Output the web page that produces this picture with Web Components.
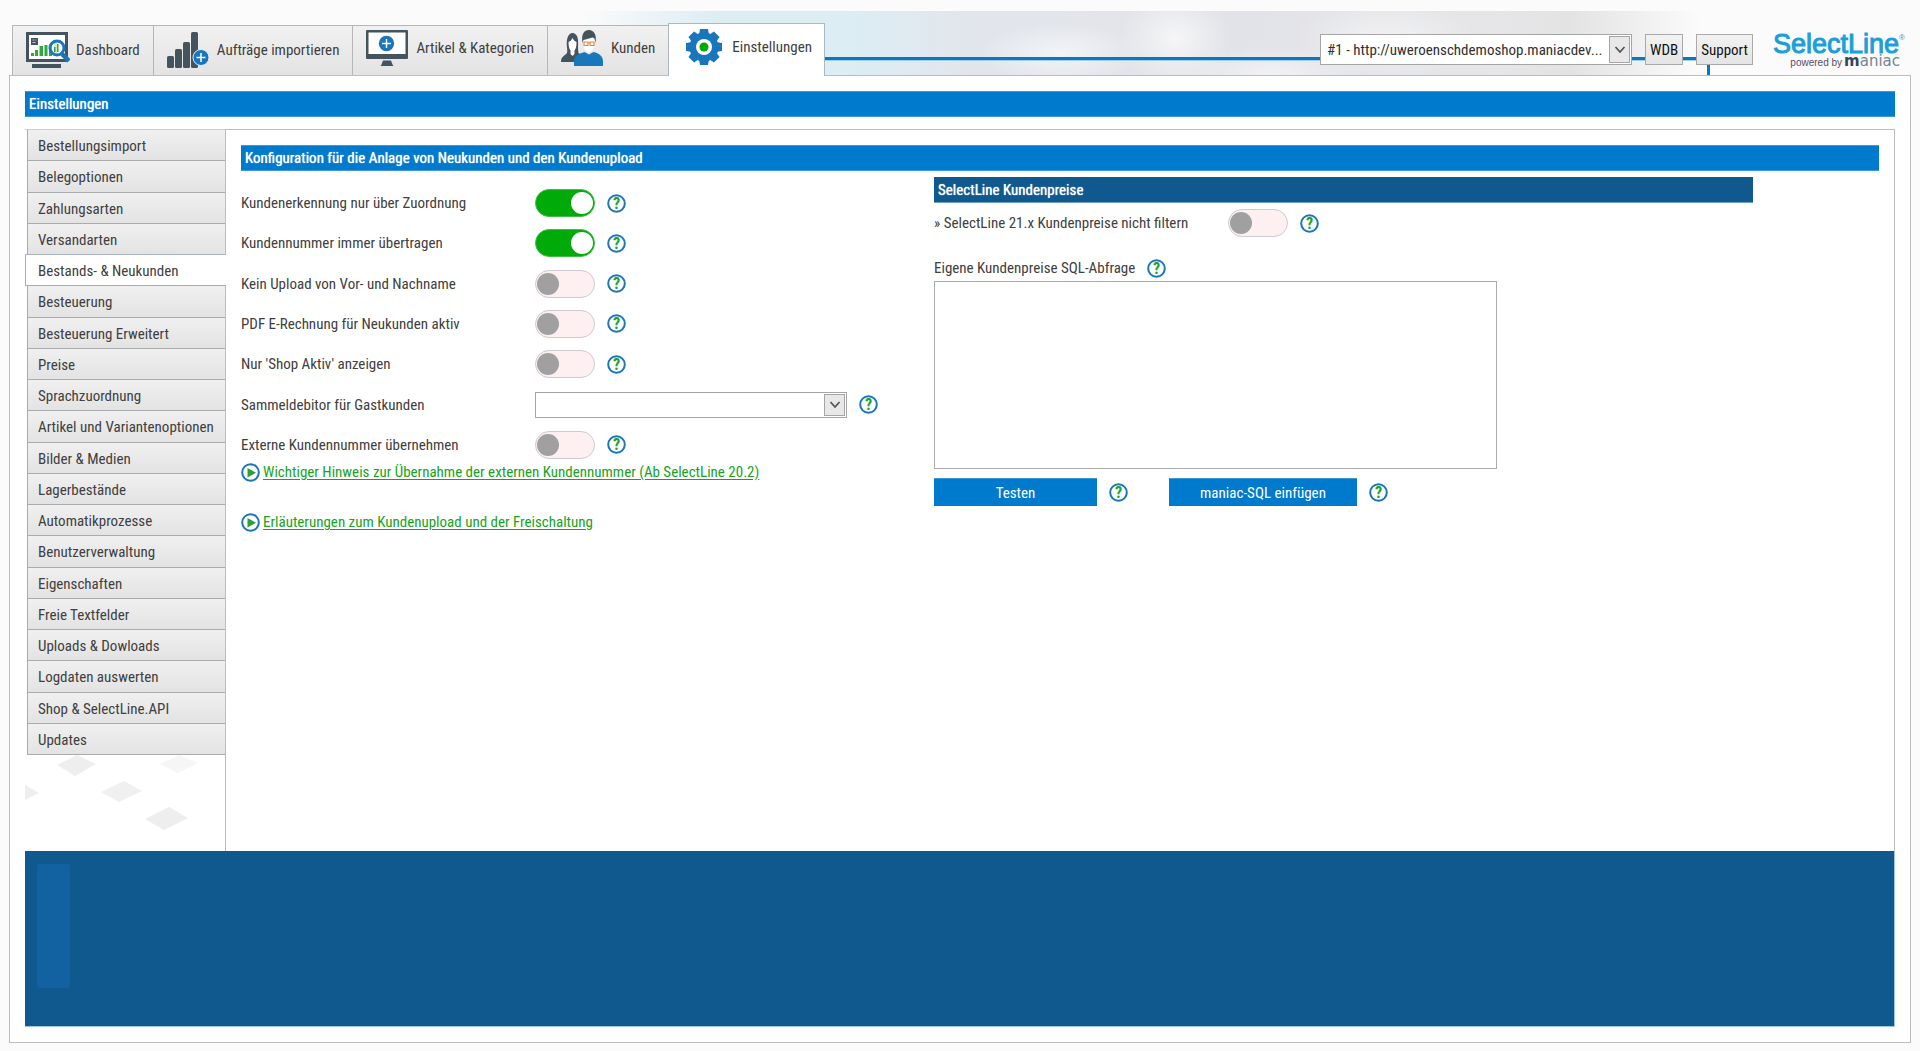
<!DOCTYPE html>
<html lang="de">
<head>
<meta charset="utf-8">
<title>Einstellungen – SelectLine powered by maniac</title>
<style>
  body { margin: 0; background: #fbfbfb; font: 15px/20px "Roboto Condensed", Roboto, sans-serif; color: #404040; }
</style>
</head>
<body>
<shop-app></shop-app>

<template id="t-app">
  <style>
    :host { display: flex; flex-direction: column; min-height: 100vh; box-sizing: border-box; padding-bottom: 9px; }
    main { flex: 1; display: flex; flex-direction: column; margin: 0 9px; padding: 15px; background: #fff; border: 1px solid #bdbdbf; }
    .work { flex: 1; display: flex; margin-top: 12px; }
    footer { background: #10598e; height: 138px; padding: 13px 12px 24px; border-right: 1px solid #9dc6e2; border-bottom: 1px solid #9dc6e2; }
    footer div { width: 33px; height: 124px; background: #1261a0; border-radius: 2px; }
  </style>
  <app-header></app-header>
  <main>
    <title-bar>Einstellungen</title-bar>
    <div class="work">
      <side-nav></side-nav>
      <customer-config></customer-config>
    </div>
    <footer><div></div></footer>
  </main>
</template>

<template id="t-bar">
  <style>
    :host { display: block; background: #007acd; color: #fff; border: solid #3f99d8; border-width: 1px 0; padding: 2px 4px; }
    :host([dark]) { background: #10598e; border-color: #10598e #10598e #6d9fc4; }
    h2 { margin: 0; font: inherit; text-shadow: 0 0 1px #fff; }
  </style>
  <h2><slot></slot></h2>
</template>

<template id="t-header">
  <style>
    :host { display: flex; align-items: flex-end; height: 75px; padding-left: 12px;
      background:
        radial-gradient(ellipse 56px 46px at 1175px 28px, #fafafacc, #fafafa00) 0 11px no-repeat,
        radial-gradient(ellipse 80px 30px at 1060px 42px, #f6f8facc, #f6f8fa00) 0 11px no-repeat,
        radial-gradient(ellipse 90px 40px at 1385px 28px, #f6f6f8bb, #f6f6f800) 0 11px no-repeat,
        radial-gradient(ellipse 90px 30px at 1270px 64px, #f8f8fabb, #f8f8fa00) 0 11px no-repeat,
        linear-gradient(90deg, #fcfcfc00 580px, #dcedf4 720px, #dcedf4 850px, #e2e6ec 970px, #e2e3e8 1240px, #e6e6e8 1500px, #e3e3e4 1570px, #fbfbfb 1700px) 0 11px no-repeat; }
    nav { display: flex; align-items: flex-end; }
    .right { flex: 1; align-self: stretch; display: flex; justify-content: flex-end; align-items: flex-start; gap: 13px; padding: 34px 15px 0 0;
      background:
        linear-gradient(90deg, #0e76bd, #0e76bd) left 57px / calc(100% - 211px) 3px no-repeat,
        linear-gradient(90deg, #9fcdea, #9fcdea) left 60px / calc(100% - 211px) 1px no-repeat,
        linear-gradient(90deg, #0e76bd, #0e76bd) right 210px top 57px / 3px 18px no-repeat; }
    button { box-sizing: border-box; height: 31px; margin: 0; padding: 0 4px; font: inherit; color: #111; border: 1px solid #a9a9a9; background: linear-gradient(#f2f2f2, #e4e4e4); }
    brand-logo { margin-left: 7px; }
    drop-down { width: 312px; }
  </style>
  <nav>
    <main-tab low text="Dashboard" icon="dashboard"></main-tab>
    <main-tab low text="Aufträge importieren" icon="orders"></main-tab>
    <main-tab text="Artikel &amp; Kategorien" icon="articles"></main-tab>
    <main-tab text="Kunden" icon="customers"></main-tab>
    <main-tab text="Einstellungen" icon="gear" active></main-tab>
  </nav>
  <div class="right">
    <drop-down tall label="Shop" value="#1 - http://uweroenschdemoshop.maniacdev..."></drop-down>
    <button type="button">WDB</button>
    <button type="button">Support</button>
    <brand-logo></brand-logo>
  </div>
</template>

<template id="t-tab">
  <style>
    :host { display: block; }
    a { display: flex; align-items: center; gap: 6px; box-sizing: border-box; height: 50px; padding: 0 13px 6px 13px; color: inherit; text-decoration: none;
      background: linear-gradient(#f1f1f1, #e3e3e3); border: solid #b4b6b8; border-width: 1px 0 0 1px; }
    :host([low]) a { padding-bottom: 2px; }
    :host([active]) { position: relative; margin-bottom: -1px; }
    :host([active]) a { height: 53px; padding-right: 12px; background: #fff; border-color: #a9b8c4; border-right-width: 1px; }
    svg { display: block; width: 44px; height: 38px; }
  </style>
  <a href="#"><span class="icon"></span><span class="text"></span></a>
</template>

<template id="t-drop">
  <style>
    :host { display: grid; }
    select, .arrow { grid-area: 1 / 1; }
    select { appearance: none; box-sizing: border-box; width: 100%; height: 26px; margin: 0; padding: 0 28px 0 6px; font: inherit; color: #303030; background: #fff; border: 1px solid #a5a5a5; border-radius: 0; }
    :host([tall]) select { height: 31px; }
    .arrow { justify-self: end; box-sizing: border-box; margin: 2px; width: 21px; border: 1px solid #a5a5a5; background: #e8e8e8; pointer-events: none; display: grid; place-items: center; }
    svg { display: block; }
  </style>
  <select><option></option></select>
  <span class="arrow"><svg width="12" height="8" viewBox="0 0 12 8"><path d="M1.500 1 6 6l4.500-5" fill="none" stroke="#555" stroke-width="1.800"/></svg></span>
</template>

<template id="t-logo">
  <style>
    :host { display: flex; flex-direction: column; align-items: flex-end; width: 132px; font-family: "Liberation Sans", sans-serif; }
    .name { font-size: 27px; line-height: 20px; color: #1b9fd9; -webkit-text-stroke: 1px #1b9fd9; display: flex; }
    sup { font-size: 8px; line-height: 8px; vertical-align: top; -webkit-text-stroke: 0; }
    .by { display: flex; align-items: baseline; gap: 2px; font-size: 10px; line-height: 14px; color: #574d69; padding-right: 5px; }
    .maniac { font-family: "DejaVu Sans", sans-serif; font-size: 15px; color: #76848f; }
    b { color: #34475a; font-weight: 700; }
  </style>
  <span class="name">SelectLine<sup>®</sup></span>
  <span class="by"><span>powered by</span><span class="maniac"><b>m</b>aniac</span></span>
</template>

<template id="t-side">
  <style>
    :host { display: flex; flex-direction: column; width: 200px; }
    ul { display: flex; flex-direction: column; box-sizing: border-box; height: 626px; margin: 0; padding: 0 0 0 2px; list-style: none; border-top: 1px solid #cfcfcf; }
    li { flex: 1; display: flex; }
    a { flex: 1; display: flex; align-items: center; padding: 2px 0 0 10px; color: inherit; text-decoration: none; background: linear-gradient(#f0f0f0, #e3e3e3); border: solid #a9abad; border-width: 0 0 1px 1px; }
    a.on { background: #fff; margin: -1px -1px 0 -2px; padding-left: 12px; border-top: 1px solid #a9b4bf; position: relative; }
    svg { display: block; }
  </style>
  <nav><ul></ul></nav>
  <svg width="200" height="96" viewBox="0 0 200 96" fill="#eee"><path d="M32 10 52 0l19 9-21 12zM0 30l14 8-14 7z"/><path d="m76 37 23-11 18 10-23 11z" fill="#f0f0f0"/><path d="m120 64 24-12 19 11-24 12z"/><path d="m135 9 19-9 19 8-20 10z" fill="#f6f6f6"/></svg>
</template>

<template id="t-help">
  <style>
    :host { display: block; flex: none; }
    button { display: block; width: 19px; height: 19px; margin: 0; padding: 0; border: 0; background: none; }
    svg { display: block; }
    text { font: 700 16px "Roboto Condensed", Roboto, sans-serif; }
  </style>
  <button type="button" aria-label="Hilfe"><svg width="19" height="19" viewBox="0 0 19 19"><circle cx="9.5" cy="9.5" r="8.3" fill="#fff" stroke="#1c75b9" stroke-width="2"/><text x="9.5" y="15" text-anchor="middle" fill="#17a337">?</text></svg></button>
</template>

<template id="t-row">
  <style>
    :host { display: flex; align-items: center; height: 30px; }
    label { width: 294px; }
    help-icon { margin-left: 12px; }
    input { appearance: none; display: grid; align-items: center; box-sizing: border-box; width: 60px; height: 28px; margin: 0; padding: 0 1px; background: #feeff0; border: 1px solid #cfc9d2; border-radius: 14px; }
    input::before { content: ""; width: 22px; height: 22px; border-radius: 50%; background: #a0a0a0; }
    input:checked { background: #00aa08; border-color: #43bd4a; }
    input:checked::before { background: #fff; justify-self: end; }
  </style>
  <label for="c"></label><input id="c" type="checkbox"><help-icon></help-icon>
</template>

<template id="t-selrow">
  <style>
    :host { display: flex; align-items: center; height: 30px; }
    span { width: 294px; }
    drop-down { width: 312px; }
    help-icon { margin-left: 12px; }
  </style>
  <span></span><drop-down></drop-down><help-icon></help-icon>
</template>

<template id="t-note">
  <style>
    :host { display: flex; align-items: center; gap: 3px; height: 20px; }
    a { color: #17a31d; text-decoration: underline; text-underline-offset: 2px; }
    svg { display: block; }
  </style>
  <svg width="19" height="19" viewBox="0 0 19 19"><circle cx="9.5" cy="9.5" r="8.3" fill="#fff" stroke="#1c75b9" stroke-width="2"/><path d="M6.500 5v9.500L15 9.700z" fill="#2aa03a"/></svg>
  <a href="#"><slot></slot></a>
</template>

<template id="t-config">
  <style>
    :host { flex: 1; display: block; padding: 15px 15px 0; border: solid #bdbdbf; border-width: 1px 1px 0 1px; }
    .cols { display: grid; grid-template-columns: 693px 1fr; }
    .rows { display: flex; flex-direction: column; justify-content: space-between; height: 272px; padding-top: 17px; margin-bottom: 2px; }
    link-note + link-note { margin-top: 30px; }
    .prices { padding-top: 6px; }
    title-bar[dark] { max-width: 811px; margin-bottom: 5px; }
    .sql { display: flex; align-items: center; gap: 12px; height: 20px; margin: 20px 0 3px; }
    textarea { display: block; box-sizing: border-box; width: 563px; height: 188px; margin: 0; border: 1px solid #ababab; resize: none; background: #fff; font: inherit; }
    .actions { display: flex; align-items: center; margin-top: 9px; }
    .actions help-icon { margin: 0 41px 0 12px; }
    .actions button { width: 163px; height: 28px; margin: 0; padding: 0; border: 0; border-top: 1px solid #3f99d8; background: #007acd; color: #fff; font: inherit; }
    .actions button.wide { width: 188px; }
  </style>
  <title-bar>Konfiguration für die Anlage von Neukunden und den Kundenupload</title-bar>
  <div class="cols">
    <div>
      <div class="rows">
        <toggle-row on label="Kundenerkennung nur über Zuordnung"></toggle-row>
        <toggle-row on label="Kundennummer immer übertragen"></toggle-row>
        <toggle-row label="Kein Upload von Vor- und Nachname"></toggle-row>
        <toggle-row label="PDF E-Rechnung für Neukunden aktiv"></toggle-row>
        <toggle-row label="Nur 'Shop Aktiv' anzeigen"></toggle-row>
        <select-row label="Sammeldebitor für Gastkunden"></select-row>
        <toggle-row label="Externe Kundennummer übernehmen"></toggle-row>
      </div>
      <link-note>Wichtiger Hinweis zur Übernahme der externen Kundennummer (Ab SelectLine 20.2)</link-note>
      <link-note>Erläuterungen zum Kundenupload und der Freischaltung</link-note>
    </div>
    <div class="prices">
      <title-bar dark>SelectLine Kundenpreise</title-bar>
      <toggle-row label="» SelectLine 21.x Kundenpreise nicht filtern"></toggle-row>
      <div class="sql"><label for="sql">Eigene Kundenpreise SQL-Abfrage</label><help-icon></help-icon></div>
      <textarea id="sql"></textarea>
      <div class="actions">
        <button type="button">Testen</button><help-icon></help-icon>
        <button type="button" class="wide">maniac-SQL einfügen</button><help-icon></help-icon>
      </div>
    </div>
  </div>
</template>

<script>
const DARK = '#44545e', BLUE = '#1976bd';
const tooth = [0, 45, 90, 135, 180, 225, 270, 315].map(a => `<path d="M-5-12-4-18H4L5-12z" transform="rotate(${a})"/>`).join('');
const ICONS = {
  dashboard: `<g fill="${DARK}"><rect y="1" width="42" height="30"/><rect x="3" y="4" width="36" height="24" fill="#fff"/><rect x="5" y="7" width="7" height="7"/><path d="M6.500 9h2m1 0h1m-4 2.500h3" stroke="#b9c3c9"/><rect x="6" y="33" width="29" height="4"/></g><path d="M5 22h3v3H5zM9 19h3v6H9zM13.500 15h3.500v10h-3.500zM18.500 14h3v11h-3zM23 14h3v11h-3zM28 11h3v14h-3z" fill="#2fa93b"/><circle cx="31" cy="17" r="7" fill="#fff" fill-opacity=".75" stroke="${BLUE}" stroke-width="3"/><path d="M28 16h1.500v5H28zM31 13h1.500v8H31z" fill="#2fa93b"/><path d="m36 23 7 7" stroke="${BLUE}" stroke-width="4.500"/>`,
  orders: `<g fill="${DARK}"><rect y="25" width="7" height="12" rx="1.500"/><rect x="8" y="18" width="7" height="19" rx="1.500"/><rect x="16" y="11" width="7" height="26" rx="1.500"/><rect x="24" y="1" width="7" height="36" rx="1.500"/></g><circle cx="34" cy="26.500" r="8" fill="${BLUE}" stroke="#e8eef2"/><path d="M29.500 26.500h9m-4.500-4.500v9" stroke="#fff" stroke-width="1.500"/>`,
  articles: `<rect y="1" width="42" height="29" rx="1" fill="${DARK}"/><rect x="2.500" y="3.500" width="37" height="21.500" fill="#fff"/><path d="M17 31.500h8l1.500 4 1 1.500h-13l1-1.500z" fill="${DARK}"/><circle cx="20.500" cy="14.500" r="7.700" fill="${BLUE}"/><path d="M16 14.500h9M20.500 10v9" stroke="#fff" stroke-width="1.500"/>`,
  customers: `<path d="M0 33c0-6 4-6 6-9 1-3-1-8 0-13C7 6 9 4 11.500 4s5 2 5.500 7c.5 4-.5 8 .5 13l3 2-6 7z" fill="${DARK}"/><path d="M7.500 13c2-1 3-2 4-4 1 2 2 3 4 4 0 4-.5 7-2 8.500V25l-2 2-2-2v-3.500C8 20 7.500 16 7.500 13z" fill="#fff"/><path d="M22 9c2-3 9-2 12 0l-.5 7-2 5-3.500 2.500-4-2.500-2-5z" fill="#fff"/><path d="M21.500 14C20 5 23 1 28 1s8 5 6.500 13l-1-4.500-2-1-7 2-2 .5z" fill="${DARK}"/><path d="M23 13h4v3.500h-4zm6 0h4v3.500h-4zm-2 1h2" fill="none" stroke="#e58a3a" stroke-width="1.200"/><path d="M13 37v-5c0-4 3-7 9-8.500l1.500-.5 4.500 2.500 4.500-2.500 2 .5c5 1.500 7.500 5 7.500 8.500v5z" fill="${BLUE}"/>`,
  gear: `<g transform="translate(22 19)"><g fill="${BLUE}">${tooth}<circle r="14.500"/></g><circle r="8" fill="#fff"/><circle r="4.500" fill="#0a0"/></g>`
};

class Part extends HTMLElement {
  constructor() {
    super();
    this.attachShadow({ mode: 'open' }).append(document.getElementById(this.constructor.tpl).content.cloneNode(true));
  }
  $(sel) { return this.shadowRoot.querySelector(sel); }
}
const define = (name, tpl, setup) => customElements.define(name, class extends Part {
  static tpl = tpl;
  connectedCallback() { if (setup) setup(this); }
});

define('title-bar', 't-bar');
define('brand-logo', 't-logo');
define('help-icon', 't-help');
define('link-note', 't-note');
define('main-tab', 't-tab', el => {
  el.$('.text').textContent = el.getAttribute('text');
  el.$('.icon').innerHTML = `<svg viewBox="0 0 44 38" aria-hidden="true">${ICONS[el.getAttribute('icon')]}</svg>`;
});
define('drop-down', 't-drop', el => {
  el.$('select').setAttribute('aria-label', el.getAttribute('label') || '');
  el.$('option').textContent = el.getAttribute('value') || '';
});
define('toggle-row', 't-row', el => {
  el.$('label').textContent = el.getAttribute('label');
  el.$('input').checked = el.hasAttribute('on');
});
define('select-row', 't-selrow', el => {
  el.$('span').textContent = el.getAttribute('label');
  el.$('drop-down').shadowRoot.querySelector('select').setAttribute('aria-label', el.getAttribute('label'));
});
define('side-nav', 't-side', el => {
  const items = ['Bestellungsimport', 'Belegoptionen', 'Zahlungsarten', 'Versandarten', 'Bestands- & Neukunden', 'Besteuerung', 'Besteuerung Erweitert', 'Preise', 'Sprachzuordnung', 'Artikel und Variantenoptionen', 'Bilder & Medien', 'Lagerbestände', 'Automatikprozesse', 'Benutzerverwaltung', 'Eigenschaften', 'Freie Textfelder', 'Uploads & Dowloads', 'Logdaten auswerten', 'Shop & SelectLine.API', 'Updates'];
  for (const text of items) {
    const li = document.createElement('li'), a = document.createElement('a');
    a.href = '#';
    a.textContent = text;
    if (text === 'Bestands- & Neukunden') a.className = 'on';
    li.append(a);
    el.$('ul').append(li);
  }
});
define('customer-config', 't-config');
define('app-header', 't-header');
define('shop-app', 't-app');
</script>
</body>
</html>
